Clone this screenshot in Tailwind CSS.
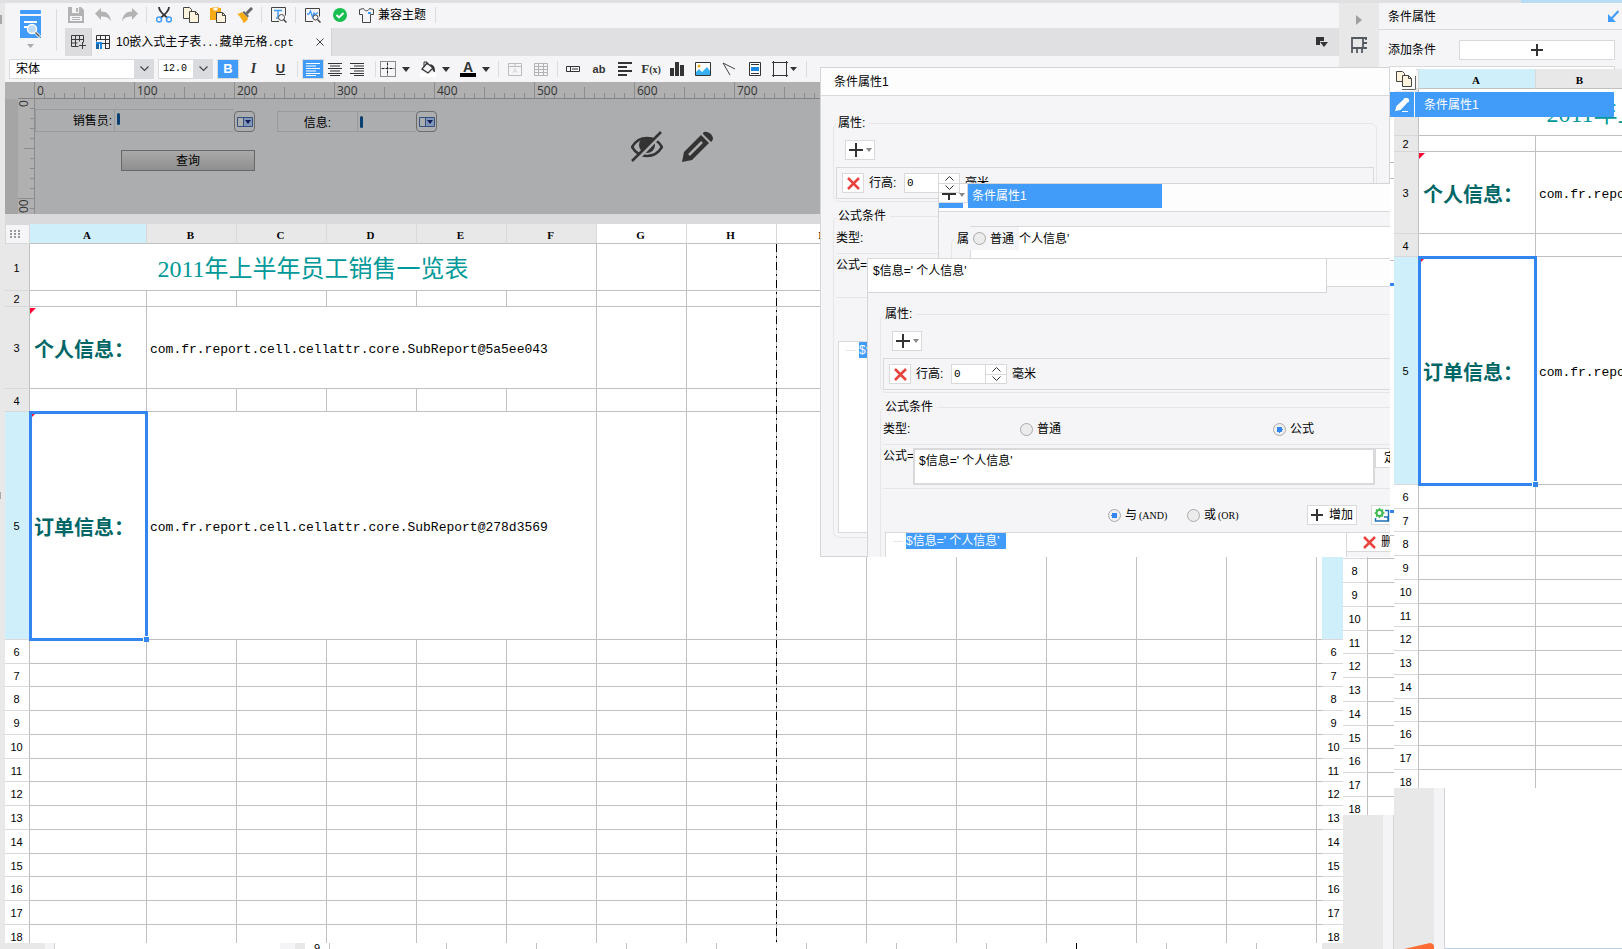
<!DOCTYPE html>
<html lang="zh-CN">

<head>
    <meta charset="UTF-8">
    <meta name="viewport" content="width=device-width, initial-scale=1.0">
    <title>10嵌入式主子表 - 报表设计器</title>
    <script src="https://cdn.jsdelivr.net/npm/@tailwindcss/browser@4"></script>
</head>

<body class="relative h-screen overflow-hidden bg-white font-['Liberation_Sans','Noto_Sans_CJK_SC',sans-serif] text-xs text-black">
    <div class="flex h-full flex-col">
        <div class="flex h-[3px] shrink-0 bg-[#e0e0e2]">
            <div class="ml-auto w-[101px] bg-[#b9dcf5]"></div>
        </div>
        <div class="flex min-h-0 flex-1">
            <!-- collapsed left dock -->
            <div class="flex w-[5px] shrink-0 flex-col bg-[#e8e8e8]">
                <div class="mt-3 h-[9px] w-[2px] bg-[#a8a8a8]"></div>
                <div class="mt-[468px] h-[7px] w-px bg-[#a8a8a8]"></div>
            </div>

            <main class="flex min-w-0 flex-1 flex-col">
                <!-- top toolbar -->
                <header class="flex h-[53px] shrink-0 bg-[#f5f5f8]">
                    <button class="flex w-[51px] shrink-0 flex-col items-center pt-[7px]" aria-label="预览">
                        <svg width="22" height="28" viewBox="0 0 22 28">
                            <rect width="21" height="4" rx="1" fill="#419bf9" />
                            <path d="M0 6h21v22H0z" fill="#419bf9" />
                            <path d="M4 12h13M4 17h5" stroke="#fff" stroke-width="2" />
                            <circle cx="12" cy="19" r="4.500" fill="#bcd9f7" stroke="#fff" stroke-width="1.500" />
                            <path d="M15 22l5 5" stroke="#fff" stroke-width="3" />
                            <path d="M15.500 22.500l4 4" stroke="#555" stroke-width="1.500" />
                        </svg>
                        <svg class="mt-[6px]" width="7" height="4"><path d="M0 0h7L3.500 4z" fill="#aaa" /></svg>
                    </button>
                    <div class="mt-[6px] h-[42px] w-px bg-[#dcdce0]"></div>
                    <div class="flex min-w-0 flex-1 flex-col">
                        <div class="flex h-[25px] items-center pb-px pl-[5px]">
                            <button class="flex w-[27px] justify-center" aria-label="保存"><svg width="16" height="16" viewBox="0 0 16 16"><path d="M0 0h13l3 3v13H0z" fill="#b3b3b3" /><path d="M4 0h7v6H4z" fill="#f5f5f8" /><path d="M8 1h2v4H8z" fill="#b3b3b3" /><path d="M2 9h12v5H2z" fill="#f5f5f8" /><path d="M4 10.500h8M4 12.500h8" stroke="#b3b3b3" /></svg></button>
                            <button class="flex w-[27px] justify-center" aria-label="撤销"><svg width="16" height="14" viewBox="0 0 16 14"><path d="M0 5.500L6 0v3.500c6 0 9 3 10 10-2-4-5-5-10-5V12z" fill="#b3b3b3" /></svg></button>
                            <button class="flex w-[27px] justify-center" aria-label="重做"><svg width="16" height="14" viewBox="0 0 16 14"><path d="M16 5.500L10 0v3.500c-6 0-9 3-10 10 2-4 5-5 10-5V12z" fill="#b3b3b3" /></svg></button>
                            <div class="flex w-[7px] justify-center"><div class="h-4 w-px bg-[#dcdce0]"></div></div>
                            <button class="flex w-[27px] justify-center" aria-label="剪切"><svg width="16" height="16" viewBox="0 0 16 16"><path d="M3 0c0 3 2 6 8.500 11M13 0c0 3-2 6-8.500 11" fill="none" stroke="#333" stroke-width="1.800" /><circle cx="3" cy="12.500" r="2.500" fill="none" stroke="#419bf9" stroke-width="1.500" /><circle cx="13" cy="12.500" r="2.500" fill="none" stroke="#419bf9" stroke-width="1.500" /></svg></button>
                            <button class="flex w-[27px] justify-center" aria-label="复制"><svg width="16" height="16" viewBox="0 0 16 16"><path d="M.5.5h6l2 2v9h-8z" fill="#fff5de" stroke="#444" /><path d="M6.500 4.500h6l3 3v8h-9z" fill="#fff5de" stroke="#444" /><path d="M12.500 4.500v3h3" fill="none" stroke="#444" /></svg></button>
                            <button class="flex w-[27px] justify-center" aria-label="粘贴"><svg width="16" height="16" viewBox="0 0 16 16"><path d="M0 1h11v12H0z" fill="#f6ab15" /><path d="M3 0h5v4H3z" fill="#fff" stroke="#f6ab15" /><path d="M6.500 5.500h6l3 3v7h-9z" fill="#fff5de" stroke="#444" /><path d="M12.500 5.500v3h3" fill="none" stroke="#444" /></svg></button>
                            <button class="flex w-[27px] justify-center" aria-label="格式刷"><svg width="16" height="16" viewBox="0 0 16 16"><path d="M15 1L9.500 6.500" stroke="#666" stroke-width="3" /><path d="M7 4l5 5-1.500 1.500-5-5z" fill="#666" /><path d="M0 6.500c2 .5 4-.5 5-1.500l6 6c-.5 2-2 4-4.500 5C5 12 3 9.500 0 6.500z" fill="#f6ab15" /></svg></button>
                            <div class="flex w-[7px] justify-center"><div class="h-4 w-px bg-[#dcdce0]"></div></div>
                            <button class="flex w-[27px] justify-center" aria-label="查找"><svg width="16" height="16" viewBox="0 0 16 16"><path d="M8 14.500H.5V.5h14v8" fill="none" stroke="#444" /><path d="M3 3.500h8M7 3.500V11M5 11h4" stroke="#419bf9" stroke-width="1.500" /><circle cx="10.500" cy="10.500" r="3" fill="#f5f5f8" stroke="#444" /><path d="M12.500 12.500l3 3" stroke="#444" stroke-width="1.500" /></svg></button>
                            <div class="flex w-[7px] justify-center"><div class="h-4 w-px bg-[#dcdce0]"></div></div>
                            <button class="flex w-[27px] justify-center" aria-label="检测"><svg width="16" height="16" viewBox="0 0 16 16"><path d="M8 14.500H.5V1.500h14v8" fill="none" stroke="#444" /><path d="M2 7h2l1.500-3 2 6L9 6l1 1.500 3-2" fill="none" stroke="#419bf9" stroke-width="1.300" /><circle cx="10.500" cy="10.500" r="2.500" fill="#f5f5f8" stroke="#444" /><path d="M12.500 12.500l3 3" stroke="#444" stroke-width="1.500" /></svg></button>
                            <button class="flex w-[27px] justify-center" aria-label="通过"><svg width="14" height="14" viewBox="0 0 14 14"><circle cx="7" cy="7" r="7" fill="#18be50" /><path d="M3.500 7l2.500 2.500 4.500-4.500" fill="none" stroke="#fff" stroke-width="1.800" /></svg></button>
                            <button class="flex items-center pl-[6px]"><svg width="15" height="15" viewBox="0 0 15 15"><path d="M.5 1.500L4.500.5c1 3 5 3 6 0l4 1v5h-3v8h-8v-8h-3z" fill="none" stroke="#444" /><path d="M9 5h3" stroke="#419bf9" stroke-width="2" /></svg><span class="pl-1">兼容主题</span></button>
                            <div class="ml-[9px] h-4 w-px bg-[#dcdce0]"></div>
                        </div>
                        <!-- file tabs -->
                        <div class="ml-2 flex h-[28px] items-stretch bg-[#e0e0e2]">
                            <button class="flex w-[26px] items-center justify-center bg-[#dcdcdf]" aria-label="新建"><svg width="15" height="14" viewBox="0 0 15 14" fill="none" stroke="#3c3c3c"><path d="M.5.5h12v7M.5.5v11h7M.5 4.500h12M.5 8h6M4.500.5v11M8.500.5v6M8 10.500h7M11.500 7v7" /></svg></button>
                            <div class="flex w-[241px] items-center border-x border-[#d4d4d7] bg-[#f5f5f8] pl-1">
                                <svg width="14" height="14" viewBox="0 0 14 14"><path d="M.5.5h13v13H9M.5 4.500h13M4.500.5v4M9.500.5v13M.5.5v6M6 8.500h7" fill="none" stroke="#333" /><path d="M0 7h6v7H4V9H0z" fill="#1b87e5" /><path d="M0 9h3v5H0z" fill="#1565a8" /></svg>
                                <span class="pt-px pl-[6px]">10嵌入式主子表<span class="font-['Liberation_Mono',monospace] text-[10px]">...</span>藏单元格<span class="font-['Liberation_Mono',monospace] text-[11px]">.cpt</span></span>
                                <button class="mr-[7px] ml-auto" aria-label="关闭"><svg width="8" height="8" viewBox="0 0 8 8"><path d="M.5.5l7 7M7.500.5l-7 7" stroke="#444" /></svg></button>
                            </div>
                            <button class="mr-[11px] ml-auto" aria-label="标签列表"><svg width="12" height="10" viewBox="0 0 12 10"><path d="M0 0h8v4H4v4H0z" fill="#333" /><path d="M4 5h8l-4 5z" fill="#333" /></svg></button>
                        </div>
                    </div>
                </header>

                <!-- format toolbar -->
                <div class="flex h-[26px] shrink-0 items-center bg-[#f5f5f8] pl-1">
                    <div class="relative h-5 w-[145px]">
                        <select class="h-full w-full appearance-none border border-[#d9dadd] bg-white px-[6px] leading-4" aria-label="字体"><option>宋体</option></select>
                        <div class="pointer-events-none absolute inset-y-0 right-0 flex w-5 items-center justify-center bg-[#dadbde]"><svg width="9" height="6" viewBox="0 0 9 6"><path d="M.5.5l4 4 4-4" fill="none" stroke="#444" stroke-width="1.200" /></svg></div>
                    </div>
                    <div class="relative ml-1 h-5 w-[55px]">
                        <select class="h-full w-full appearance-none border border-[#d9dadd] bg-white px-1 font-['Liberation_Mono',monospace] text-[10px] leading-4" aria-label="字号"><option>12.0</option></select>
                        <div class="pointer-events-none absolute inset-y-0 right-0 flex w-5 items-center justify-center bg-[#dadbde]"><svg width="9" height="6" viewBox="0 0 9 6"><path d="M.5.5l4 4 4-4" fill="none" stroke="#444" stroke-width="1.200" /></svg></div>
                    </div>
                    <button class="ml-1 h-5 w-[22px] border border-[#d9dadd] bg-[#419bf9] text-[13px] leading-4 font-bold text-white">B</button>
                    <button class="ml-px w-[27px] font-['Liberation_Serif',serif] text-sm font-bold text-[#333] italic">I</button>
                    <button class="w-[27px] text-[13px] font-bold text-[#333] underline">U</button>
                    <div class="flex w-[7px] justify-center"><div class="h-4 w-px bg-[#dcdce0]"></div></div>
                    <button class="ml-px flex h-5 w-[22px] items-center justify-center border border-[#d9dadd] bg-[#419bf9]" aria-label="左对齐"><svg width="14" height="13" viewBox="0 0 14 13"><path d="M0 .5h14M0 5.500h14M0 10.500h14M0 3h10M0 8h10M0 12.500h10" stroke="#fff" /></svg></button>
                    <button class="flex w-[22px] justify-center" aria-label="居中"><svg width="14" height="13" viewBox="0 0 14 13"><path d="M0 .5h14M0 5.500h14M0 10.500h14M2 3h10M2 8h10M2 12.500h10" stroke="#333" /></svg></button>
                    <button class="flex w-[22px] justify-center" aria-label="右对齐"><svg width="14" height="13" viewBox="0 0 14 13"><path d="M0 .5h14M0 5.500h14M0 10.500h14M4 3h10M4 8h10M4 12.500h10" stroke="#333" /></svg></button>
                    <div class="ml-1 flex w-[7px] justify-center"><div class="h-4 w-px bg-[#dcdce0]"></div></div>
                    <button class="ml-px flex items-center gap-[6px]" aria-label="边框"><svg width="16" height="16" viewBox="0 0 16 16"><path d="M.5.5h15v15H.5z" fill="none" stroke="#222" stroke-dasharray="1 1" /><path d="M7.500 1.500v13M1.500 7.500h13" stroke="#222" stroke-dasharray="3 1" /></svg><svg width="8" height="5"><path d="M0 0h8L4 5z" fill="#333" /></svg></button>
                    <button class="ml-[10px] flex items-center gap-[6px]" aria-label="背景色"><svg width="16" height="16" viewBox="0 0 16 16"><path d="M0 12h16v4H0z" fill="#fff" /><path d="M7 2l6 5-5 5-6-4z" fill="none" stroke="#333" stroke-width="1.300" /><path d="M4 6V1h3v3" fill="none" stroke="#333" /><path d="M10 3c4 1 5 3 5 8-3 0-2-4-4-6z" fill="#333" /></svg><svg width="8" height="5"><path d="M0 0h8L4 5z" fill="#333" /></svg></button>
                    <button class="ml-[10px] flex items-center gap-[6px]" aria-label="字体颜色"><span class="w-4 border-b-4 border-black text-sm leading-3 font-bold text-[#333]">A</span><svg width="8" height="5"><path d="M0 0h8L4 5z" fill="#333" /></svg></button>
                    <div class="ml-[5px] flex w-[7px] justify-center"><div class="h-4 w-px bg-[#dcdce0]"></div></div>
                    <button class="flex w-[26px] justify-center" aria-label="合并"><svg width="14" height="13" viewBox="0 0 14 13" fill="none" stroke="#bbb"><path d="M.5.5h13v12H.5zM.5 3.500h13M7 .5v3" /><path d="M5 10l2-5 2 5M5.500 8.500h3" stroke="#ddd" /></svg></button>
                    <button class="flex w-[26px] justify-center" aria-label="拆分"><svg width="14" height="13" viewBox="0 0 14 13" fill="none" stroke="#b3b3b3"><path d="M.5.5h13v12H.5zM.5 3.500h13M.5 6.500h13M.5 9.500h13M4.500.5v12M9.500.5v12" /></svg></button>
                    <div class="flex w-[6px] justify-center"><div class="h-4 w-px bg-[#dcdce0]"></div></div>
                    <button class="flex w-[26px] justify-center" aria-label="控件"><svg width="14" height="6" viewBox="0 0 14 6" fill="none" stroke="#333"><path d="M.5.5h13v5H.5zM4.500.5v5M6 3h6" /></svg></button>
                    <button class="w-[26px] text-[11px] font-bold text-[#333]">ab</button>
                    <button class="flex w-[26px] justify-center" aria-label="富文本"><svg width="14" height="14" viewBox="0 0 14 14"><path d="M0 1h14M0 5h9M0 9h14M0 13h9" stroke="#333" stroke-width="1.800" /></svg></button>
                    <button class="w-[26px] font-['Liberation_Serif',serif] text-[13px] font-bold text-[#333]">F<span class="text-[10px]">(x)</span></button>
                    <button class="flex w-[26px] justify-center" aria-label="图表"><svg width="14" height="14" viewBox="0 0 14 14"><path d="M0 6h4v8H0zM5 0h4v14H5zM10 3h4v11h-4z" fill="#333" /></svg></button>
                    <button class="flex w-[26px] justify-center" aria-label="图片"><svg width="16" height="14" viewBox="0 0 16 14"><path d="M.5.5h15v13H.5z" fill="#fff" stroke="#333" /><circle cx="4" cy="4" r="1.500" fill="#f6ab15" /><path d="M1 13V10l3-3 3 3 5-5 3 4v4z" fill="#38b0f0" /></svg></button>
                    <button class="flex w-[26px] justify-center" aria-label="斜线"><svg width="14" height="14" viewBox="0 0 14 14"><path d="M1 1l7 12M1 1l12 6" stroke="#444" /></svg></button>
                    <button class="flex w-[26px] justify-center" aria-label="子报表"><svg width="12" height="14" viewBox="0 0 12 14"><path d="M.5.5h11v13H.5z" fill="#fff" stroke="#333" /><path d="M2 2.500h8M2 11.500h8" stroke="#333" /><path d="M2 5h8v4H2z" fill="#1b87e5" /></svg></button>
                    <button class="flex items-center gap-[2px] pl-[4px]" aria-label="形状"><svg width="16" height="16" viewBox="0 0 16 16" fill="none" stroke="#333"><path d="M0 1.500h16M0 14.500h16M1.500 0v16M14.500 0v16" /></svg><svg width="7" height="4"><path d="M0 0h7L3.500 4z" fill="#333" /></svg></button>
                    <div class="ml-[9px] h-4 w-px bg-[#dcdce0]"></div>
                </div>

                <!-- parameter pane with rulers -->
                <section class="relative h-[132px] shrink-0 bg-[#acadaf]">
                    <svg class="block h-[17px] w-full bg-[#b0b0b0]" aria-label="水平标尺">
                        <defs>
                            <pattern id="hTicks" x="29" width="100" height="17" patternUnits="userSpaceOnUse">
                                <path d="M.5 0v17M50.500 5v12M10.500 11v6M20.500 11v6M30.500 11v6M40.500 11v6M60.500 11v6M70.500 11v6M80.500 11v6M90.500 11v6" stroke="#8c8c8c" />
                            </pattern>
                        </defs>
                        <rect x="29" width="100%" height="17" fill="url(#hTicks)" />
                        <path d="M13 16.500h2000" stroke="#828282" />
                        <g id="hLabels" class="fill-[#333] font-['Open_Sans',sans-serif] text-xs"></g>
                    </svg>
                    <div class="flex h-[115px]">
                        <div class="w-[13px] bg-[#a5a5a6]"></div>
                        <svg class="h-full w-[17px] bg-[#b0b0b0]" aria-label="垂直标尺">
                            <path d="M12 9.500h5M12 19.500h5M12 29.500h5M12 39.500h5M6 49.500h11M12 59.500h5M12 69.500h5M12 79.500h5M12 89.500h5M0 99.500h17M12 109.500h5M16.500 0v115" stroke="#8c8c8c" />
                            <g class="fill-[#333] font-['Open_Sans',sans-serif] text-xs"><text transform="translate(10 8) rotate(-90)">0</text><text transform="translate(10 114) rotate(-90)">00</text></g>
                        </svg>
                        <form class="pt-[10px]">
                            <div class="flex items-end">
                                <label for="seller" class="h-[23px] w-[80px] border border-[#989a9c] pr-[2px] text-right leading-[23px]">销售员:</label>
                                <input id="seller" type="text" class="h-[23px] w-[119px] border-y border-[#989a9c]">
                                <button type="button" class="flex h-[21px] w-[21px] items-center justify-center rounded-sm border border-[#6c6c6c]" aria-label="选择销售员"><svg width="16" height="10" viewBox="0 0 16 10"><path d="M.5.5h15v9H.5zM6.500.5v9" fill="none" stroke="#33507f" /><path d="M7 1h8v8H7z" fill="#8095b8" /><path d="M8 3h6l-3 4z" fill="#111f5a" /></svg></button>
                                <label for="info" class="ml-[22px] h-[21px] w-[81px] border border-[#989a9c] pr-[26px] text-right leading-[22px]">信息:</label>
                                <input id="info" type="text" class="h-[21px] w-[58px] border-y border-[#989a9c]">
                                <button type="button" class="flex h-[21px] w-[21px] items-center justify-center rounded-sm border border-[#6c6c6c]" aria-label="选择信息"><svg width="16" height="10" viewBox="0 0 16 10"><path d="M.5.5h15v9H.5zM6.500.5v9" fill="none" stroke="#33507f" /><path d="M7 1h8v8H7z" fill="#8095b8" /><path d="M8 3h6l-3 4z" fill="#111f5a" /></svg></button>
                            </div>
                            <button type="button" class="mt-[18px] ml-[86px] block h-[21px] w-[134px] border border-[#686868] bg-linear-to-b from-[#aaa] to-[#8e8e8e]">查询</button>
                        </form>
                    </div>
                    <div class="absolute top-[31px] left-[112px] h-3 w-[3px] rounded bg-[#0a4070]"></div>
                    <div class="absolute top-[34px] left-[355px] h-3 w-[3px] rounded bg-[#0a4070]"></div>
                    <div class="absolute top-[49px] left-[626px] flex gap-[19px]">
                        <button aria-label="隐藏"><svg width="32" height="32" viewBox="0 0 32 32"><path d="M1 16c7-12 23-12 30 0-7 12-23 12-30 0z" fill="none" stroke="#333" stroke-width="2.500" /><circle cx="16" cy="14" r="8" fill="#333" /><path d="M3 32L31 3" stroke="#acadaf" stroke-width="3" /><path d="M1 30L30 1" stroke="#333" stroke-width="2.500" /></svg></button>
                        <button aria-label="编辑"><svg width="32" height="32" viewBox="0 0 32 32"><path d="M0 31l2-10L19 4l8 8-17 17z" fill="#333" /><path d="M21 2c3-4 13 3 9 8l-1 1-8-8z" fill="#333" /><path d="M7 24L20 11" stroke="#acadaf" stroke-width="2.500" /></svg></button>
                    </div>
                </section>
                <div class="h-[10px] shrink-0 bg-[#dadadc]"></div>

                <!-- main sheet -->
                <div class="relative h-[719px] shrink-0 overflow-hidden">
                    <table class="sheet w-full table-fixed border-separate border-spacing-0"></table>
                    <svg class="absolute top-5 left-[771px] h-full w-px"><path d="M.5 0V900" stroke="#000" stroke-dasharray="8 4 2 4" /></svg>
                </div>

                <!-- sliver of the sheet below -->
                <div class="flex min-h-0 flex-1 overflow-hidden">
                    <div class="w-10 bg-[#e8e8e8]"></div>
                    <div class="w-[10px] border-r border-[#d4d4d4] bg-[#f4f4f7]"></div>
                    <div class="ml-[225px] w-[15px] bg-[#f4f4f7]"></div>
                    <div class="w-[10px] bg-[#e8e8e8]"></div>
                    <div class="w-[25px] border-r border-[#c0c0c0] text-center text-[11px] leading-[10px]">9</div>
                    <div class="w-[117px] border-r border-[#c0c0c0]"></div>
                    <div class="w-[90px] border-r border-[#c0c0c0]"></div>
                    <div class="w-[90px] border-r border-[#c0c0c0]"></div>
                    <div class="w-[90px] border-r border-[#c0c0c0]"></div>
                    <div class="w-[90px] border-r border-[#c0c0c0]"></div>
                    <div class="w-[90px] border-r border-[#c0c0c0]"></div>
                    <div class="w-[90px] border-r border-[#c0c0c0]"></div>
                    <div class="w-[90px] border-r border-black"></div>
                    <div class="w-[90px] border-r border-[#c0c0c0]"></div>
                    <div class="w-[90px] border-r border-[#c0c0c0]"></div>
                </div>
            </main>
            <div class="w-[283px] shrink-0"></div>
        </div>
    </div>

    <!-- strips of the sheets that show behind -->
    <div class="absolute top-[557px] right-[279px] bottom-0 w-[21px] overflow-hidden bg-[#e8e8e8]">
        <div class="h-[386px] overflow-hidden bg-white">
            <table class="sheet -mt-[333px] w-[708px] table-fixed border-separate border-spacing-0"></table>
        </div>
    </div>
    <div class="absolute top-[557px] right-[228px] bottom-0 flex w-[51px] flex-col">
        <div class="h-[258px] overflow-hidden bg-white">
            <table class="sheet -mt-[461px] w-[708px] table-fixed border-separate border-spacing-0"></table>
        </div>
        <div class="flex flex-1">
            <div class="w-10 bg-[#e8e8e8]"></div>
            <div class="flex-1 border-r border-[#d4d4d4] bg-[#f4f4f7]"></div>
        </div>
    </div>

    <!-- right property panel -->
    <aside class="absolute top-[3px] right-0 flex h-[66px] w-[283px]">
        <div class="flex w-10 flex-col items-center bg-[#e8e8e8] pt-[12px]">
            <button aria-label="展开"><svg width="6" height="10"><path d="M0 0l6 5-6 5z" fill="#a0a0a0" /></svg></button>
            <button class="mt-3" aria-label="单元格属性"><svg width="17" height="16" viewBox="0 0 17 16"><path d="M1 16V1h15M1 11h15M12 1v10M12 6h4M6 11v5M11 11v5M15 1v2" fill="none" stroke="#555a62" stroke-width="1.800" /></svg></button>
        </div>
        <div class="flex flex-1 flex-col bg-[#f5f5f8]">
            <div class="flex h-[27px] items-center border-b border-[#d9d9dc] pr-[3px] pl-[9px]">
                <h2 class="flex-1 pt-px">条件属性</h2>
                <svg width="11" height="12" viewBox="0 0 11 12"><path d="M10.500 1L3 9" stroke="#419bf9" stroke-width="2" /><path d="M0 4v8h8z" fill="#419bf9" /></svg>
            </div>
            <div class="flex items-center pt-[10px] pr-[7px] pl-[9px]">
                <span class="w-[71px]">添加条件</span>
                <button class="flex h-5 flex-1 items-center justify-center border border-[#d9d9dc] bg-white" aria-label="添加条件"><svg width="12" height="12"><path d="M6 0v12M0 6h12" stroke="#333" stroke-width="2" /></svg></button>
            </div>
            <div class="mt-[6px] mr-[7px] ml-[10px] flex-1 border border-b-0 border-[#d9d9dc] bg-white"></div>
        </div>
    </aside>

    <!-- back dialog -->
    <section class="absolute top-[67px] right-[232px] left-[820px] h-[490px] overflow-hidden border border-[#d5d5d8] bg-[#f5f5f8]" aria-label="条件属性1">
        <h3 class="h-[28px] border-b border-[#d9d9dc] bg-[#fdfdfd] px-[13px] leading-7">条件属性1</h3>
        <div class="flex flex-col gap-[5px] px-3 pt-[18px]">
            <fieldset class="rounded-md border border-[#e6e6e8] px-[2px] pb-[2px]">
                <legend class="pr-1 pl-[2px] leading-[18px]">属性:</legend>
                <button class="mt-2 ml-[9px] flex h-5 w-[30px] items-center justify-center gap-[3px] border border-[#d9d9dc] bg-white" aria-label="添加属性"><svg width="14" height="14"><path d="M7 0v14M0 7h14" stroke="#333" stroke-width="2" /></svg><svg width="6" height="4"><path d="M0 0h6L3 4z" fill="#888" /></svg></button>
                <div class="mt-[7px] flex h-8 items-center border border-[#d9d9dc] pl-[5px]">
                    <button class="flex h-5 w-[22px] items-center justify-center border border-[#d9d9dc] bg-white" aria-label="删除属性"><svg width="13" height="13"><path d="M1 1l11 11M12 1L1 12" stroke="#e8433c" stroke-width="2.500" /></svg></button>
                    <label for="rowH1" class="w-10 pl-[5px]">行高:</label>
                    <input id="rowH1" type="text" value="0" class="h-5 w-[34px] border border-r-0 border-[#d9d9dc] bg-white px-[2px] font-['Liberation_Mono',monospace] text-[11px]">
                    <div class="flex h-5 w-[22px] flex-col border border-[#d9d9dc] bg-white">
                        <button class="flex flex-1 items-center justify-center border-b border-[#d9d9dc]" aria-label="增加"><svg width="9" height="5"><path d="M.5 4.500l4-4 4 4" fill="none" stroke="#333" /></svg></button>
                        <button class="flex flex-1 items-center justify-center" aria-label="减少"><svg width="9" height="5"><path d="M.5.5l4 4 4-4" fill="none" stroke="#333" /></svg></button>
                    </div>
                    <span class="pl-[5px]">毫米</span>
                </div>
            </fieldset>
            <fieldset class="h-[331px] rounded-md border border-[#e6e6e8] px-[2px]">
                <legend class="pr-1 pl-[2px] leading-[18px]">公式条件</legend>
                <div class="flex h-[29px] items-center border-b border-[#e6e6e8] pb-[2px]">类型:</div>
                <div class="h-11 border-b border-[#e6e6e8] leading-[22px]">公式=</div>
                <div class="mt-[43px] ml-[2px] h-[192px] border border-[#d9d9dc] bg-white">
                    <div class="flex items-center gap-[3px] pl-[7px] text-white"><span class="h-px w-[10px] bg-[#e6e6e8]"></span><span class="bg-[#419bf9] leading-4">$信息</span></div>
                </div>
            </fieldset>
        </div>
    </section>

    <!-- middle dialog -->
    <section class="absolute top-[183px] right-[232px] left-[938px] h-[110px] overflow-hidden border-t border-l border-[#d5d5d8] bg-[#f5f5f8]">
        <div class="flex h-7 border-b border-[#d9d9dc] bg-[#fdfdfd]">
            <div class="flex w-[29px] flex-col">
                <button class="flex h-[19px] items-start justify-center gap-[3px] border-r border-b border-[#d9d9dc] bg-white pt-[9px]" aria-label="添加"><svg width="14" height="7"><path d="M7 0v7M0 1h14" stroke="#333" stroke-width="2" /></svg><svg width="6" height="4"><path d="M0 0h6L3 4z" fill="#888" /></svg></button>
                <div class="h-[5px] w-6 bg-[#419bf9]"></div>
            </div>
            <h3 class="h-6 w-[194px] bg-[#419bf9] pl-1 leading-6 text-white">条件属性1</h3>
        </div>
        <div class="flex pl-3">
            <div class="mt-[26px] h-12 w-[19px] rounded-tl-md border-l border-[#e6e6e8]"></div>
            <div class="mt-[14px] h-[60px] flex-1 border-t border-l border-[#d9d9dc] bg-white">
                <div class="flex h-[23px] items-center">
                    <label class="-ml-[14px] flex h-[23px] w-[62px] items-center gap-1 bg-[#f5f5f8]"><span>属</span><input type="radio" name="kind0" class="h-[13px] w-[13px] shrink-0 appearance-none rounded-full border border-[#aaa] bg-[#ececec]"><span class="shrink-0">普通</span></label>
                    <span>个人信息'</span>
                </div>
            </div>
        </div>
    </section>

    <!-- spinner overlapping the middle dialog -->
    <div class="absolute top-[173px] left-[938px] flex h-5 w-[22px] flex-col border border-[#d9d9dc] bg-white">
        <button class="flex flex-1 items-center justify-center border-b border-[#d9d9dc]" aria-label="增加"><svg width="9" height="5"><path d="M.5 4.500l4-4 4 4" fill="none" stroke="#333" /></svg></button>
        <button class="flex flex-1 items-center justify-center" aria-label="减少"><svg width="9" height="5"><path d="M.5.5l4 4 4-4" fill="none" stroke="#333" /></svg></button>
    </div>

    <!-- front dialog -->
    <section class="absolute top-[258px] right-[232px] left-[867px] h-[299px] overflow-hidden bg-[#f5f5f8]">
        <div class="flex h-[35px] items-start border-t border-[#d9d9dc]">
            <textarea class="h-[34px] flex-1 resize-none border border-t-0 border-[#d5d5d8] bg-white px-[5px] py-1 leading-4" aria-label="公式">$信息=' 个人信息'</textarea>
            <div class="h-7 w-[63px] border-b border-[#d9d9dc] bg-[#fdfdfd]"></div>
        </div>
        <div class="flex h-[264px] w-[590px] flex-col gap-[5px] border-l border-[#d5d5d8] px-3 pt-[12px]">
            <fieldset class="rounded-md border border-[#e6e6e8] px-[2px] pb-[2px]">
                <legend class="pr-1 pl-[2px] leading-[18px]">属性:</legend>
                <button class="mt-2 ml-[9px] flex h-5 w-[30px] items-center justify-center gap-[3px] border border-[#d9d9dc] bg-white" aria-label="添加属性"><svg width="14" height="14"><path d="M7 0v14M0 7h14" stroke="#333" stroke-width="2" /></svg><svg width="6" height="4"><path d="M0 0h6L3 4z" fill="#888" /></svg></button>
                <div class="mt-[7px] flex h-8 items-center border border-[#d9d9dc] pl-[5px]">
                    <button class="flex h-5 w-[22px] items-center justify-center border border-[#d9d9dc] bg-white" aria-label="删除属性"><svg width="13" height="13"><path d="M1 1l11 11M12 1L1 12" stroke="#e8433c" stroke-width="2.500" /></svg></button>
                    <label for="rowH2" class="w-10 pl-[5px]">行高:</label>
                    <input id="rowH2" type="text" value="0" class="h-5 w-[34px] border border-r-0 border-[#d9d9dc] bg-white px-[2px] font-['Liberation_Mono',monospace] text-[11px]">
                    <div class="flex h-5 w-[22px] flex-col border border-[#d9d9dc] bg-white">
                        <button class="flex flex-1 items-center justify-center border-b border-[#d9d9dc]" aria-label="增加"><svg width="9" height="5"><path d="M.5 4.500l4-4 4 4" fill="none" stroke="#333" /></svg></button>
                        <button class="flex flex-1 items-center justify-center" aria-label="减少"><svg width="9" height="5"><path d="M.5.5l4 4 4-4" fill="none" stroke="#333" /></svg></button>
                    </div>
                    <span class="pl-[5px]">毫米</span>
                </div>
            </fieldset>
            <fieldset class="h-[331px] shrink-0 rounded-md border border-[#e6e6e8] px-[2px]">
                <legend class="pr-1 pl-[2px] leading-[18px]">公式条件</legend>
                <div class="flex h-[29px] items-center border-b border-[#e6e6e8] pb-[2px]">
                    <span class="w-[137px]">类型:</span>
                    <label class="flex w-[253px] items-center gap-1"><input type="radio" name="kind" class="h-[13px] w-[13px] appearance-none rounded-full border border-[#aaa] bg-[#ececec]">普通</label>
                    <label class="flex items-center gap-1"><input type="radio" name="kind" checked class="h-[13px] w-[13px] appearance-none rounded-full border border-[#aaa] bg-[radial-gradient(circle,#3385f2_0_3px,#f0f0f0_3px)]">公式</label>
                </div>
                <div class="flex h-11 items-start border-b border-[#e6e6e8] pt-[3px]">
                    <label for="formula" class="w-[30px] shrink-0 whitespace-nowrap">公式=</label>
                    <textarea id="formula" class="h-[37px] w-[462px] shrink-0 resize-none border-2 border-[#d9d9dc] bg-white px-1 py-[3px] leading-4">$信息=' 个人信息'</textarea>
                    <button class="h-5 w-14 shrink-0 border border-[#d9d9dc] bg-white pl-2 text-left leading-4">定义</button>
                </div>
                <div class="flex h-[43px] items-center pt-[9px] pl-[225px]">
                    <label class="flex w-[79px] items-center gap-1"><input type="radio" name="join" checked class="h-[13px] w-[13px] appearance-none rounded-full border border-[#aaa] bg-[radial-gradient(circle,#3385f2_0_3px,#f0f0f0_3px)]"><span>与<span class="pl-[2px] font-['Liberation_Serif',serif] text-[10px]">(AND)</span></span></label>
                    <label class="flex w-[120px] items-center gap-1"><input type="radio" name="join" class="h-[13px] w-[13px] appearance-none rounded-full border border-[#aaa] bg-[#ececec]"><span>或<span class="pl-[2px] font-['Liberation_Serif',serif] text-[10px]">(OR)</span></span></label>
                    <button class="flex h-5 w-[50px] items-center justify-center gap-[6px] border border-[#d9d9dc] bg-white"><svg class="shrink-0" width="12" height="12"><path d="M6 0v12M0 6h12" stroke="#333" stroke-width="2" /></svg><span class="shrink-0">增加</span></button>
                    <button class="ml-[14px] h-5 w-10 border border-[#d9d9dc] bg-white pl-[2px]" aria-label="修改"><svg width="16" height="14" viewBox="0 0 16 14"><path d="M1.500 10v3H14.500V2.500H11M10 9h4v4" fill="none" stroke="#1b6fb5" stroke-width="1.500" /><circle cx="5.500" cy="5" r="3" fill="none" stroke="#3fb950" stroke-width="2" /><path d="M5.500 0v2M5.500 8v2M.5 5h2M8.500 5h2M2 1.500L3.500 3M7.500 7L9 8.500M9 1.500L7.500 3M3.500 7L2 8.500" stroke="#3fb950" stroke-width="1.500" /></svg></button>
                </div>
                <div class="ml-[2px] flex">
                    <div class="h-[192px] w-[462px] shrink-0 border border-[#d9d9dc] bg-white">
                        <div class="flex items-center gap-[3px] pl-[7px] text-white"><span class="h-px w-[10px] bg-[#e6e6e8]"></span><span class="bg-[#419bf9] pr-[6px] leading-4">$信息=' 个人信息'</span></div>
                    </div>
                    <button class="flex h-5 w-[60px] shrink-0 items-center gap-[5px] border border-l-0 border-[#d9d9dc] bg-white pl-4"><svg class="shrink-0" width="13" height="13"><path d="M1 1l11 11M12 1L1 12" stroke="#e8433c" stroke-width="2.500" /></svg><span class="shrink-0">删除</span></button>
                </div>
            </fieldset>
        </div>
    </section>

    <!-- gap between the dialogs and the right sheet -->
    <div class="absolute top-[69px] right-[228px] flex h-[488px] w-1 flex-col bg-white">
        <div class="mt-[93px] h-[17px] border-y border-[#c0c0c0]"></div>
        <div class="mt-[81px] h-px bg-[#c0c0c0]"></div>
        <div class="mt-[22px] h-[3px] bg-[#3385f2]"></div>
        <div class="mt-[224px] h-[3px] bg-[#3385f2]"></div>
        <div class="mt-[22px] h-px bg-[#c0c0c0]"></div>
    </div>

    <!-- right sheet -->
    <div class="absolute top-[69px] right-0 bottom-0 flex w-[228px] flex-col overflow-hidden bg-white">
        <div class="h-[719px] shrink-0 overflow-hidden">
            <table class="sheet w-[708px] table-fixed border-separate border-spacing-0"></table>
        </div>
        <div class="flex flex-1 items-stretch">
            <div class="flex w-10 flex-col justify-end bg-[#e8e8e8]"><svg class="ml-[10px] block" width="31" height="6"><path d="M0 6L26 0q4 0 5 6z" fill="#ff6b35" /></svg></div>
            <div class="w-[11px] border-r border-[#d4d4d4] bg-[#f4f4f7]"></div>
            <div class="flex-1 border-b border-[#b9cfe8]"></div>
        </div>
    </div>

    <!-- selected condition in the right list -->
    <div class="absolute top-[69px] right-[206px] flex h-[22px] w-[26px] items-start justify-end bg-white pt-[2px]">
        <button aria-label="复制条件"><svg width="20" height="19" viewBox="0 0 20 19"><path d="M.5.5h6l2 2v8h-8z" fill="#fff5de" stroke="#444" /><path d="M6.500 4.500h6l3 3v8h-9z" fill="#fff5de" stroke="#444" /><path d="M12.500 4.500v3h3" fill="none" stroke="#444" /><path d="M6 18.500h13.500V5" fill="none" stroke="#666" /></svg></button>
    </div>
    <div class="absolute top-[92px] right-2 flex h-[25px] w-[224px] bg-[#419bf9] text-white">
        <button class="flex w-[25px] items-center justify-center border-r border-white" aria-label="编辑条件"><svg width="14" height="14" viewBox="0 0 14 14"><path d="M0 13l1.500-5L9 1l4 3-7.500 8z" fill="#fff" /><path d="M10 0c2-1 5 2 4 3l-1 1-4-3zM7 13.500h6" fill="#fff" stroke="#fff" /></svg></button>
        <span class="pl-[9px] leading-[26px]">条件属性1</span>
    </div>

    <script>
        const rowHeights = [47, 16, 82, 23, 228, 24, 23, 24, 24, 24, 23, 24, 24, 24, 23, 24, 24, 24];
        const columns = 'ABCDEFGHIJKLMN'.split('');
        const empty = '<td class="border-r border-b border-[#c0c0c0] p-0"></td>';
        const marker = '<svg class="absolute top-px left-0" width="6" height="6"><path d="M0 0h6L0 6z" fill="#f03"/></svg>';

        function labelCell(text) {
            return `<td class="relative border-r border-b border-[#c0c0c0] p-0 pt-1 pl-1 text-left text-xl leading-6 font-bold whitespace-nowrap text-[#006666]">${marker}${text}</td>`;
        }

        function reportCell(text) {
            return `<td colspan="5" class="border-r border-b border-[#c0c0c0] p-0 pt-1 pl-[3px] font-['Liberation_Mono',monospace] text-[13px] whitespace-nowrap">${text}</td>`;
        }

        function rowCells(n) {
            const tail = empty.repeat(8) + '<td class="border-b border-[#c0c0c0] p-0"></td>';
            if (n === 1) {
                return `<td colspan="6" class="border-r border-b border-[#c0c0c0] p-0 pt-1 text-center font-['Liberation_Serif','Noto_Sans_CJK_SC',serif] text-2xl leading-6 whitespace-nowrap text-[#009999]">2011年上半年员工销售一览表</td>` + tail;
            }
            if (n === 3) {
                return labelCell('个人信息：') + reportCell('com.fr.report.cell.cellattr.core.SubReport@5a5ee043') + tail;
            }
            if (n === 5) {
                const selection = '<div class="absolute -inset-[2px] top-[-1px] -left-px border-[3px] border-[#3385f2]"></div><div class="absolute -right-[3px] -bottom-[3px] h-[6px] w-[6px] border-t border-l border-white bg-[#3385f2]"></div></td>';
                return labelCell('订单信息：').replace('</td>', selection) + reportCell('com.fr.report.cell.cellattr.core.SubReport@278d3569') + tail;
            }
            if (n === 18) {
                return '<td class="border-r border-[#c0c0c0] p-0"></td>'.repeat(14) + '<td class="p-0"></td>';
            }
            return empty.repeat(6) + tail;
        }

        function headColor(i) {
            if (i === 0) return 'bg-[#cff0fb]';
            return i < 6 ? 'bg-[#e8e8e8]' : 'bg-white';
        }

        function rowColor(n) {
            if (n === 5) return 'bg-[#cff0fb]';
            return n < 5 ? 'bg-[#e8e8e8]' : 'bg-white';
        }

        function buildSheet(table) {
            let html = '<colgroup><col class="w-[25px]"><col class="w-[117px]">' + '<col class="w-[90px]">'.repeat(13) + '<col></colgroup>';
            html += '<thead><tr class="h-5"><th class="border border-[#d9d9dc] bg-[#f5f5f8] p-0 pr-1"><svg class="mx-auto" width="11" height="8" aria-label="全选"><path d="M0 1h11M0 4h11M0 7h11" stroke="#999" stroke-width="2" stroke-dasharray="2 2"/></svg></th>';
            columns.forEach((c, i) => {
                html += `<th class="border-r border-b border-r-[#d9d9dc] border-b-[#c0c0c0] p-0 pt-[2px] pr-[2px] font-['Liberation_Serif',serif] text-[11px] leading-3 font-bold ${headColor(i)}">${c}</th>`;
            });
            html += '<th class="border-b border-[#c0c0c0] p-0"></th></tr></thead><tbody>';
            rowHeights.forEach((h, i) => {
                const n = i + 1;
                html += `<tr style="height:${h}px"><th class="border-r border-b border-r-[#c0c0c0] border-b-[#d9d9dc] p-0 pt-px pr-px text-[11px] leading-3 font-normal ${rowColor(n)}">${n}</th>${rowCells(n)}</tr>`;
            });
            table.innerHTML = html + '</tbody>';
        }

        document.querySelectorAll('.sheet').forEach(buildSheet);

        const labels = document.getElementById('hLabels');
        for (let v = 0; v <= 700; v += 100) {
            const text = document.createElementNS('http://www.w3.org/2000/svg', 'text');
            text.setAttribute('x', 32 + v);
            text.setAttribute('y', 13);
            text.textContent = v;
            labels.appendChild(text);
        }
    </script>
</body>

</html>
